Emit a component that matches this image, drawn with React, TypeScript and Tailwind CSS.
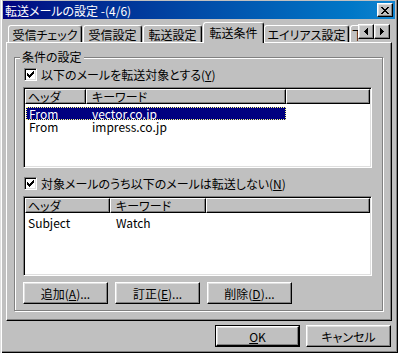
import React from "react";

type R = [number, number, number, number];

function Px({ pts, w, h, color = "#000" }: { pts: R[]; w: number; h: number; color?: string }) {
  return (
    <svg width={w} height={h} viewBox={`0 0 ${w} ${h}`} shapeRendering="crispEdges" className="block">
      {pts.map(([x, y, rw, rh], i) => (
        <rect key={i} x={x} y={y} width={rw} height={rh} fill={color} />
      ))}
    </svg>
  );
}

const CHECK: R[] = [
  [0, 2, 1, 3],
  [1, 3, 1, 3],
  [2, 4, 1, 3],
  [3, 3, 1, 3],
  [4, 2, 1, 3],
  [5, 1, 1, 3],
  [6, 0, 1, 3],
];

const XMARK: R[] = [
  [0, 0, 2, 1], [6, 0, 2, 1],
  [1, 1, 2, 1], [5, 1, 2, 1],
  [2, 2, 4, 1],
  [3, 3, 2, 1],
  [2, 4, 4, 1],
  [1, 5, 2, 1], [5, 5, 2, 1],
  [0, 6, 2, 1], [6, 6, 2, 1],
];

const LEFT: R[] = [
  [0, 3, 1, 1],
  [1, 2, 1, 3],
  [2, 1, 1, 5],
  [3, 0, 1, 7],
];
const RIGHT: R[] = [
  [0, 0, 1, 7],
  [1, 1, 1, 5],
  [2, 2, 1, 3],
  [3, 3, 1, 1],
];

function CheckBox() {
  return (
    <div className="w-[13px] h-[13px] shrink-0 bg-white border border-t-[#808080] border-l-[#808080] border-r-white border-b-white shadow-[inset_1px_1px_0_#000,inset_-1px_-1px_0_#dfdfdf] p-[2px]">
      <Px pts={CHECK} w={7} h={7} />
    </div>
  );
}

function Btn({ children }: { children: React.ReactNode }) {
  return (
    <div className="w-[85px] h-[22px] flex items-center justify-center bg-[#c0c0c0] border border-t-white border-l-white border-r-black border-b-black shadow-[inset_-1px_-1px_0_#808080,inset_1px_1px_0_#dfdfdf]">
      <span>{children}</span>
    </div>
  );
}

function U({ children }: { children: React.ReactNode }) {
  return <span className="underline underline-offset-[1px]">{children}</span>;
}

function HeaderCell({ cls, children }: { cls: string; children?: React.ReactNode }) {
  return (
    <div
      className={
        "h-[15px] flex items-center bg-[#c0c0c0] border border-t-white border-l-white border-r-black border-b-black shadow-[inset_-1px_-1px_0_#808080] " +
        cls
      }
    >
      {children}
    </div>
  );
}

function Tab({ cls, children }: { cls: string; children?: React.ReactNode }) {
  return (
    <div
      className={
        "h-[17px] shrink-0 flex items-center justify-center pt-[1px] bg-[#c0c0c0] border-t border-l border-r border-t-white border-l-white border-r-black rounded-t-[3px] shadow-[inset_-1px_0_0_#808080] whitespace-nowrap " +
        cls
      }
    >
      {children}
    </div>
  );
}

export default function App() {
  return (
    <div className="w-[398px] h-[353px] bg-[#c0c0c0] pt-[1px] px-[3px] flex flex-col overflow-hidden text-black text-[12px] leading-[13px] font-['Noto_Sans_CJK_JP','Noto_Sans_CJK_SC',sans-serif] [font-feature-settings:'palt'] shadow-[inset_1px_0_0_#dfdfdf,inset_2px_0_0_#fff,inset_-1px_-1px_0_#000,inset_-2px_-2px_0_#808080]">
      {/* Title bar */}
      <div className="h-[18px] shrink-0 flex items-center pl-[2px] pr-[2px] bg-linear-to-r from-[#000080] to-[#1084d0]">
        <span className="flex-1 text-white">転送メールの設定 -(4/6)</span>
        <div className="w-[16px] h-[14px] flex items-center justify-center bg-[#c0c0c0] border border-t-white border-l-white border-r-black border-b-black shadow-[inset_-1px_-1px_0_#808080,inset_1px_1px_0_#dfdfdf]">
          <Px pts={XMARK} w={8} h={7} />
        </div>
      </div>

      {/* Tab strip */}
      <div className="mx-[3px] h-[23px] shrink-0 flex items-end pl-[2px] pr-[2px]">
        <div className="w-[350px] h-full flex items-end">
          <Tab cls="w-[74px] mr-[1px]">受信チェック</Tab>
          <Tab cls="w-[59px] mr-[1px]">受信設定</Tab>
          <Tab cls="w-[59px] mr-[1px]">転送設定</Tab>
          <div className="relative z-10 w-[61px] h-[21px] -mb-[1px] shrink-0 flex items-center justify-center pb-[2px] bg-[#c0c0c0] border-t border-l border-r border-t-white border-l-white border-r-black rounded-t-[3px] shadow-[inset_-1px_0_0_#808080]">
            転送条件
          </div>
          <Tab cls="w-[85px] mr-[1px]">エイリアス設定</Tab>
          <div className="w-[8px] h-[17px] shrink-0 overflow-hidden bg-[#c0c0c0] border-t border-l border-t-white border-l-white rounded-tl-[3px] pt-[2px] pl-[1px] whitespace-nowrap">
            下書き
          </div>
        </div>
        <div className="self-start mt-[5px] flex">
          <div className="w-[16px] h-[15px] flex items-center justify-center bg-[#c0c0c0] border border-t-white border-l-white border-r-black border-b-black shadow-[inset_-1px_-1px_0_#808080,inset_1px_1px_0_#dfdfdf]">
            <Px pts={LEFT} w={4} h={7} />
          </div>
          <div className="w-[16px] h-[15px] flex items-center justify-center bg-[#c0c0c0] border border-t-white border-l-white border-r-black border-b-black shadow-[inset_-1px_-1px_0_#808080,inset_1px_1px_0_#dfdfdf]">
            <Px pts={RIGHT} w={4} h={7} />
          </div>
        </div>
      </div>

      {/* Tab panel */}
      <div className="mx-[3px] h-[279px] shrink-0 border border-t-white border-l-white border-r-black border-b-black shadow-[inset_-1px_-1px_0_#808080] pl-[7px] pt-[14px]">
        {/* Group box */}
        <div className="relative w-[369px] h-[254px] border border-[#808080] shadow-[1px_1px_0_#fff,inset_1px_1px_0_#fff] pt-[10px] pl-[8px] flex flex-col">
          <div className="absolute left-[5px] top-[-8px] px-[2px] bg-[#c0c0c0]">条件の設定</div>

          <div className="ml-[1px] h-[13px] flex items-center gap-[4px]">
            <CheckBox />
            <span>
              以下のメールを転送対象とする(<U>Y</U>)
            </span>
          </div>

          {/* List 1 */}
          <div className="mt-[6px] w-[349px] h-[81px] shrink-0 bg-white p-[1px] overflow-hidden border border-t-[#808080] border-l-[#808080] border-r-white border-b-white shadow-[inset_1px_1px_0_#000,inset_-1px_-1px_0_#dfdfdf]">
            <div className="flex">
              <HeaderCell cls="w-[61px] pl-[2px]">ヘッダ</HeaderCell>
              <HeaderCell cls="w-[200px] pl-[5px]">キーワード</HeaderCell>
              <HeaderCell cls="flex-1" />
            </div>
            <div className="mt-[3px] flex flex-col">
              <div className="h-[13px] flex pl-[1px]">
                <div className="w-[260px] flex bg-[#000080] text-white outline-1 outline-dotted outline-[#ffff80] -outline-offset-1">
                  <div className="w-[60px] pl-[3px]">From</div>
                  <div className="pl-[6px]">vector.co.jp</div>
                </div>
              </div>
              <div className="h-[13px] flex pl-[1px]">
                <div className="w-[60px] pl-[3px]">From</div>
                <div className="pl-[6px]">impress.co.jp</div>
              </div>
            </div>
          </div>

          <div className="mt-[9px] ml-[1px] h-[13px] flex items-center gap-[4px]">
            <CheckBox />
            <span>
              対象メールのうち以下のメールは転送しない(<U>N</U>)
            </span>
          </div>

          {/* List 2 */}
          <div className="mt-[6px] w-[349px] h-[80px] shrink-0 bg-white p-[1px] overflow-hidden border border-t-[#808080] border-l-[#808080] border-r-white border-b-white shadow-[inset_1px_1px_0_#000,inset_-1px_-1px_0_#dfdfdf]">
            <div className="flex">
              <HeaderCell cls="w-[85px] pl-[2px]">ヘッダ</HeaderCell>
              <HeaderCell cls="w-[96px] pl-[5px]">キーワード</HeaderCell>
              <HeaderCell cls="flex-1" />
            </div>
            <div className="mt-[3px] flex flex-col">
              <div className="h-[13px] flex pl-[1px]">
                <div className="w-[84px] pl-[2px]">Subject</div>
                <div className="pl-[6px]">Watch</div>
              </div>
            </div>
          </div>

          <div className="mt-[6px] flex gap-[7px]">
            <Btn>
              追加(<U>A</U>)...
            </Btn>
            <Btn>
              訂正(<U>E</U>)...
            </Btn>
            <Btn>
              削除(<U>D</U>)...
            </Btn>
          </div>
        </div>
      </div>

      {/* Bottom buttons */}
      <div className="mt-[4px] flex justify-end gap-[6px] pr-[4px]">
        <div className="w-[85px] h-[22px] border border-black">
          <div className="w-full h-full flex items-center justify-center bg-[#c0c0c0] border border-t-white border-l-white border-r-black border-b-black shadow-[inset_-1px_-1px_0_#808080,inset_1px_1px_0_#dfdfdf]">
            <span>
              <U>O</U>K
            </span>
          </div>
        </div>
        <Btn>キャンセル</Btn>
      </div>
    </div>
  );
}
